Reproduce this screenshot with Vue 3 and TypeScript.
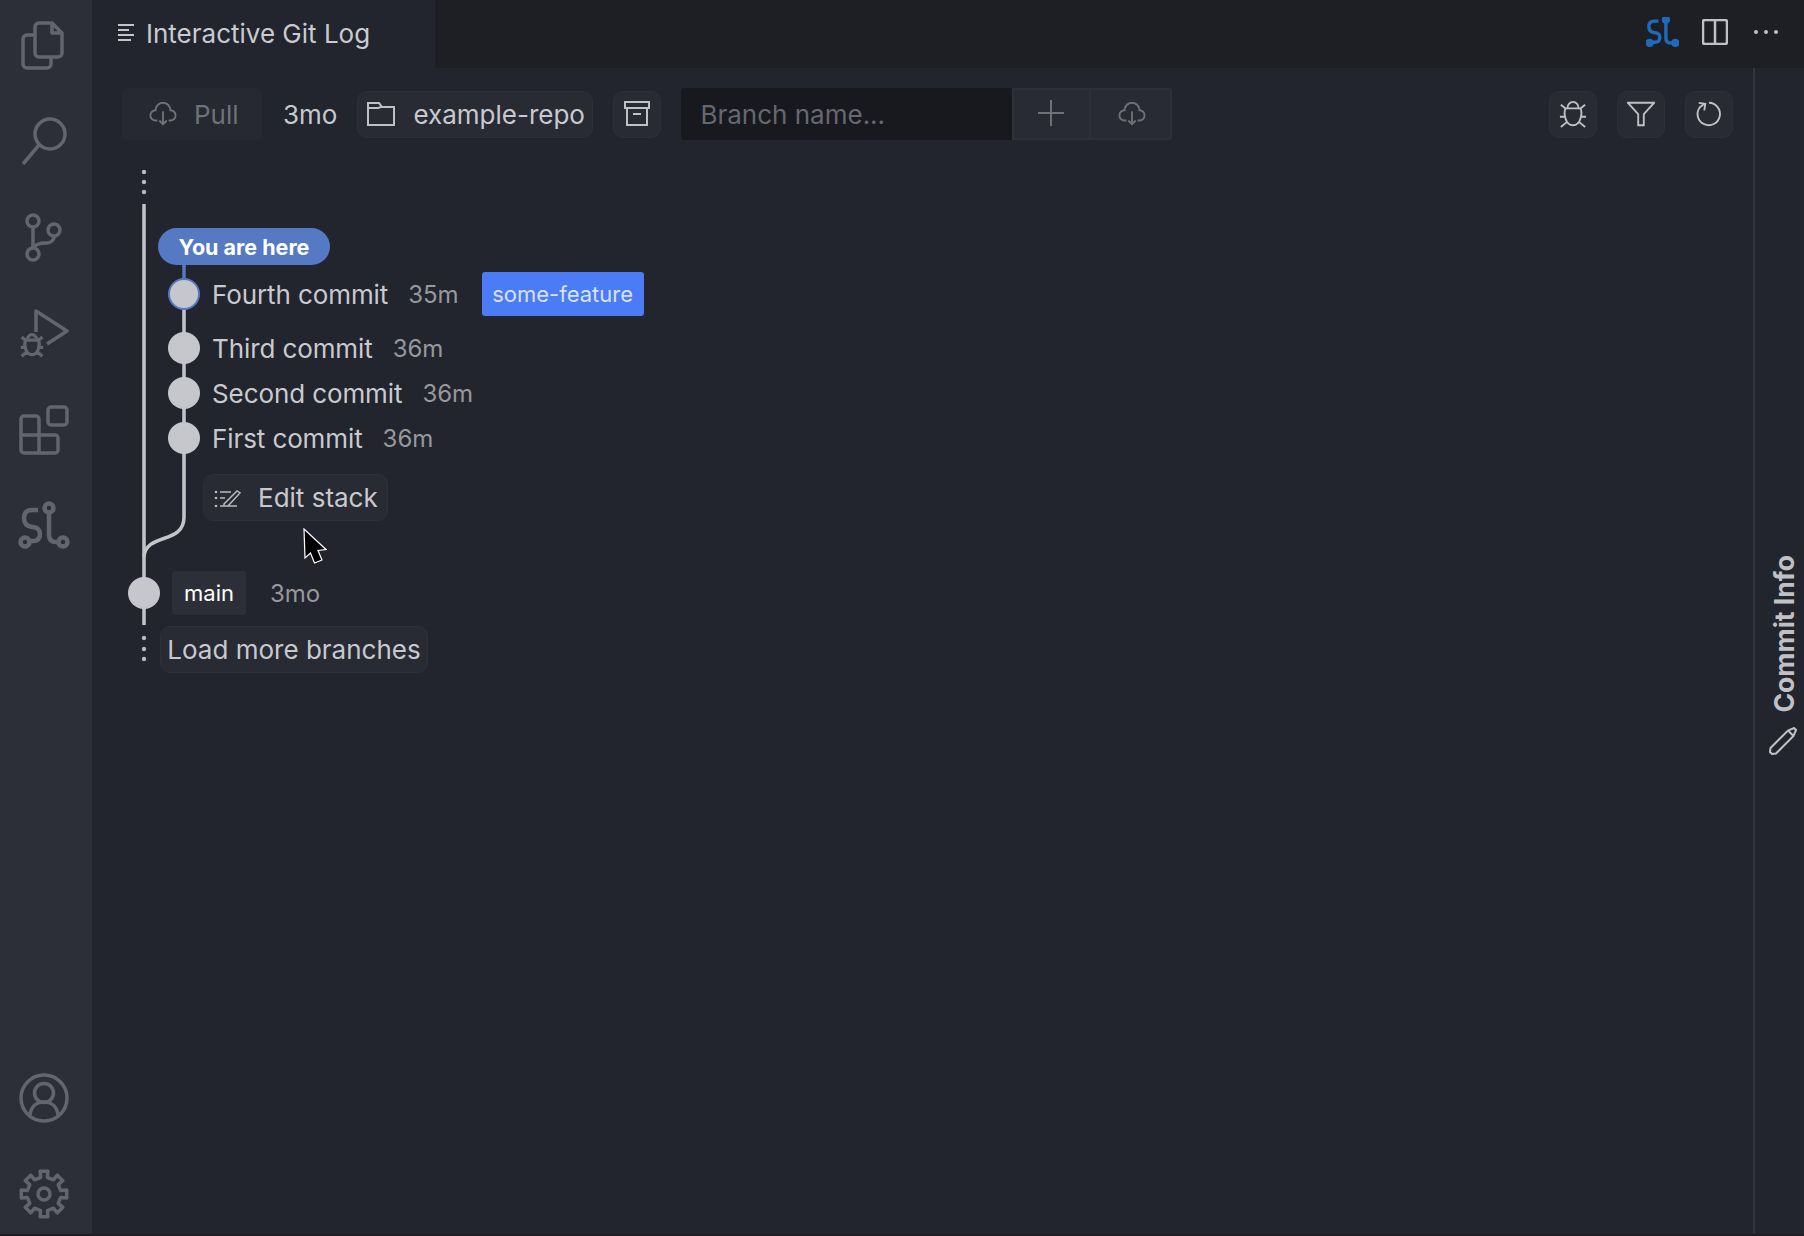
<script setup lang="ts">
interface Commit { title: string; age: string; tag?: string; head?: boolean; gapClass: string }

const commits: Commit[] = [
  { title: 'Fourth commit', age: '35m', tag: 'some-feature', head: true, gapClass: 'gap-a' },
  { title: 'Third commit', age: '36m', gapClass: 'gap-b' },
  { title: 'Second commit', age: '36m', gapClass: 'gap-c' },
  { title: 'First commit', age: '36m', gapClass: 'gap-c' },
]

function gearPoints(cx: number, cy: number): string {
  const teeth = 8
  const outer = 23
  const inner = 17
  const pts: string[] = []
  for (let i = 0; i < teeth; i++) {
    const a = (i / teeth) * Math.PI * 2 - Math.PI / 2
    const list: [number, number][] = [
      [inner, a - 0.2],
      [outer, a - 0.17],
      [outer, a + 0.17],
      [inner, a + 0.2],
    ]
    for (const [r, t] of list) {
      pts.push(`${(cx + r * Math.cos(t)).toFixed(1)},${(cy + r * Math.sin(t)).toFixed(1)}`)
    }
  }
  return pts.join(' ')
}
const gear = gearPoints(44, 48)
</script>

<template>
  <div class="app">
    <aside class="activity">
      <svg class="slot" viewBox="0 0 92 96">
        <path d="M35 35H27a4 4 0 0 0-4 4v25a4 4 0 0 0 4 4h20a4 4 0 0 0 4-4v-7" />
        <path d="M39 23h13l10 10v20a4 4 0 0 1-4 4H39a4 4 0 0 1-4-4V27a4 4 0 0 1 4-4zM52 23v10h10" />
      </svg>
      <svg class="slot" viewBox="0 96 92 96">
        <circle cx="50" cy="134" r="15" />
        <path d="M39 145 23 164" />
      </svg>
      <svg class="slot" viewBox="0 192 92 96">
        <circle cx="33" cy="221" r="6" />
        <circle cx="54" cy="230" r="6" />
        <circle cx="33" cy="254" r="6" />
        <path d="M33 227v21M54 236c0 5-4 7-8 7-6 0-11 2-13 5" />
      </svg>
      <svg class="slot" viewBox="0 288 92 96">
        <path d="M36 332v-21l31 20-20 13" />
        <g transform="translate(20 333) scale(.8)" class="mini">
          <path d="M7 9C5 13 6 27 15 27 24 27 25 13 23 9ZM9 9C9 5 12 2 15 2 18 2 21 5 21 9M2 5l6 5M28 5l-6 5M1 18h5M24 18h5M2 29l6-5M28 29l-6-5" />
        </g>
      </svg>
      <svg class="slot" viewBox="0 384 92 96">
        <rect x="48" y="407" width="19" height="18" rx="3" />
        <path d="M21 419a3 3 0 0 1 3-3h12a3 3 0 0 1 3 3v16h16a3 3 0 0 1 3 3v12a3 3 0 0 1-3 3H24a3 3 0 0 1-3-3zM21 435h18v18" />
      </svg>
      <svg class="slot sl" viewBox="0 480 92 96">
        <path d="M38 510H32Q24 510 24 518 24 526 32 527H33Q40 528 40 534 40 541 33 541H25M49 511V535Q49 542 56 542H62" />
        <circle class="node" cx="49" cy="508" r="4.5" />
        <circle class="node" cx="25" cy="542" r="4.5" />
        <circle class="node" cx="63" cy="542" r="4.5" />
      </svg>
      <div class="spring"></div>
      <svg class="slot" viewBox="0 0 92 96">
        <circle cx="44" cy="48" r="23" />
        <circle cx="44" cy="43" r="9.5" />
        <path d="M30 65c1-8 6-13 14-13s13 5 14 13" />
      </svg>
      <svg class="slot last" viewBox="0 0 92 88">
        <polygon :points="gear" />
        <circle cx="44" cy="48" r="6" />
      </svg>
    </aside>

    <div class="main">
      <header class="tabs">
        <div class="tab">
          <svg class="tab-icon" viewBox="0 0 18 20">
            <path d="M1 2h16M1 7h11M1 12h16M1 17h13" />
          </svg>
          <span>Interactive Git Log</span>
        </div>
        <div class="tab-actions">
          <svg class="sl-blue" viewBox="20 504 48 44">
            <path d="M38 510H32Q24 510 24 518 24 526 32 527H33Q40 528 40 534 40 541 33 541H25M49 511V535Q49 542 56 542H62" />
            <circle cx="49" cy="508" r="3.500" />
            <circle cx="25" cy="542" r="3.500" />
            <circle cx="63" cy="542" r="3.500" />
          </svg>
          <svg class="split" viewBox="0 0 26 26">
            <rect x="1" y="1" width="24" height="24" rx="2" />
            <path d="M13 1v24" />
          </svg>
          <div class="more"><i></i><i></i><i></i></div>
        </div>
      </header>

      <div class="body">
        <div class="content">
          <div class="toolbar">
            <button class="btn pull">
              <svg class="ic" viewBox="0 0 30 24">
                <path d="M9 19H7A5.500 5.500 0 0 1 7 8 8 8 0 0 1 23 8 5.500 5.500 0 0 1 23 19H21M15 9V23M11 19l4 4 4-4" />
              </svg>
              <span>Pull</span>
            </button>
            <span class="age-top">3mo</span>
            <button class="btn repo">
              <svg class="ic folder" viewBox="0 0 28 24">
                <path d="M1 1h11l3 4h12v18H1zM1 6h10l3-1" />
              </svg>
              <span>example-repo</span>
            </button>
            <button class="btn square archive">
              <svg class="ic" viewBox="0 0 26 26">
                <path d="M1 1h24v6H1zM3 7v17h20V7M9 13h8" />
              </svg>
            </button>
            <div class="branch">
              <div class="branch-input">Branch name...</div>
              <button class="attach plus">
                <svg class="ic" viewBox="0 0 26 26"><path d="M13 0v26M0 13h26" /></svg>
              </button>
              <button class="attach fetch">
                <svg class="ic" viewBox="0 0 30 24">
                  <path d="M9 19H7A5.500 5.500 0 0 1 7 8 8 8 0 0 1 23 8 5.500 5.500 0 0 1 23 19H21M15 9V23M11 19l4 4 4-4" />
                </svg>
              </button>
            </div>
            <div class="tools">
              <button class="btn square">
                <svg class="ic bright" viewBox="0 0 30 30">
                  <path d="M7 9C5 13 6 27 15 27 24 27 25 13 23 9ZM9 9C9 5 12 2 15 2 18 2 21 5 21 9M2 5l6 5M28 5l-6 5M1 18h5M24 18h5M2 29l6-5M28 29l-6-5" />
                </svg>
              </button>
              <button class="btn square">
                <svg class="ic bright" viewBox="0 0 30 26">
                  <path d="M1 1h28L18 13v12h-6V13z" />
                </svg>
              </button>
              <button class="btn square">
                <svg class="ic bright" viewBox="0 0 28 30">
                  <path d="M14 3A12 12 0 1 1 4 8L9 4M3 3l7 1-1 7" />
                </svg>
              </button>
            </div>
          </div>

          <div class="graph">
            <svg class="lines" viewBox="92 140 500 560">
              <circle class="dot" cx="144" cy="172" r="2.200" />
              <circle class="dot" cx="144" cy="182" r="2.200" />
              <circle class="dot" cx="144" cy="192" r="2.200" />
              <path class="grey" d="M144 204V625" />
              <path class="grey" d="M184 294V517C184 545 146 532 144 557" />
              <path class="blue" d="M184 262V280" />
              <circle class="dot" cx="144" cy="638" r="2.200" />
              <circle class="dot" cx="144" cy="649" r="2.200" />
              <circle class="dot" cx="144" cy="659" r="2.200" />
            </svg>

            <div class="here">You are here</div>

            <div v-for="c in commits" :key="c.title" class="commit" :class="c.gapClass">
              <span class="bullet" :class="{ head: c.head }"></span>
              <span class="title">{{ c.title }}</span>
              <span class="age">{{ c.age }}</span>
              <span v-if="c.tag" class="tag">{{ c.tag }}</span>
            </div>

            <button class="btn edit">
              <svg class="edit-ic" viewBox="0 0 28 20">
                <circle class="edit-dot" cx="2" cy="4" r="1.300" />
                <circle class="edit-dot" cx="2" cy="10" r="1.300" />
                <circle class="edit-dot" cx="2" cy="18" r="1.300" />
                <path d="M6 4h11M6 10h5M6 18h17M10 16 23 3l3 2-12 13h-4z" />
              </svg>
              <span>Edit stack</span>
            </button>

            <div class="commit trunk">
              <span class="bullet"></span>
              <span class="tag-main">main</span>
              <span class="age">3mo</span>
            </div>

            <button class="btn load">Load more branches</button>

            <svg class="cursor" viewBox="0 0 24 36">
              <path d="M1 1 2 30 7.500 25 11.500 35 19 32 15 22.500 23 21.500z" />
            </svg>
          </div>
        </div>

        <aside class="side">
          <span class="side-label">Commit Info</span>
          <svg class="pencil" viewBox="0 0 28 28">
            <path d="M1.500 21 19 3.500 25 1l2 2-2.500 6L7 26.500 3 27 1 25zM19 3.500l5.500 5.500" />
          </svg>
        </aside>
      </div>
    </div>
  </div>
</template>

<style>
html, body { margin: 0; background: #1e1f25; }
</style>

<style scoped>
.app {
  display: flex;
  width: 1804px;
  height: 1234px;
  overflow: hidden;
  font-family: Inter, "Liberation Sans", sans-serif;
  color: #c8c9ce;
  background: #22252d;
}
.activity {
  flex: 0 0 92px;
  display: flex;
  flex-direction: column;
  background: #2c2f38;
}
.slot {
  flex: 0 0 96px;
  width: 92px;
  height: 96px;
  fill: none;
  stroke: #62656e;
  stroke-width: 3.500;
  stroke-linejoin: round;
}
.slot.last { flex-basis: 88px; height: 88px; }
.slot.sl { stroke-width: 4.500; }
.mini { stroke-width: 4; }
.node { fill: #2c2f38; }
.spring { flex: 1; }
.main {
  flex: 1;
  min-width: 0;
  display: flex;
  flex-direction: column;
}
.tabs {
  flex: 0 0 68px;
  display: flex;
  background: #1e1f25;
}
.tab {
  width: 343px;
  box-sizing: border-box;
  padding: 0 0 2px 25px;
  display: flex;
  align-items: center;
  gap: 11px;
  background: #22252d;
  font-size: 26px;
  color: #c9cbd0;
}
.tab-icon {
  width: 18px;
  height: 20px;
  fill: none;
  stroke: #c4c5ca;
  stroke-width: 2;
}
.tab-actions {
  margin-left: auto;
  padding: 0 26px 4px 0;
  display: flex;
  align-items: center;
  gap: 23px;
}
.sl-blue {
  width: 33px;
  height: 30px;
  fill: #1e6bbd;
  stroke: #1e6bbd;
  stroke-width: 5;
}
.sl-blue path { fill: none; }
.split {
  width: 26px;
  height: 26px;
  margin-right: 3px;
  fill: none;
  stroke: #c0c1c6;
  stroke-width: 2.500;
}
.more {
  display: flex;
  gap: 6px;
}
.more i {
  width: 4px;
  height: 4px;
  border-radius: 50%;
  background: #c0c1c6;
}
.body {
  flex: 1;
  min-height: 0;
  display: flex;
}
.content {
  flex: 1;
  min-width: 0;
  display: flex;
  flex-direction: column;
}
.toolbar {
  height: 52px;
  margin-top: 20px;
  padding: 0 20px 0 30px;
  display: flex;
  align-items: center;
}
.btn {
  height: 47px;
  box-sizing: border-box;
  display: flex;
  align-items: center;
  padding: 0;
  border: 1px solid #2d3039;
  border-radius: 10px;
  background: #282b33;
  color: #c8c9ce;
  font: inherit;
  font-size: 26px;
}
.btn.square {
  width: 48px;
  justify-content: center;
}
.ic {
  fill: none;
  stroke: #c0c1c6;
  stroke-width: 2;
  width: 28px;
  height: 24px;
}
.pull {
  width: 140px;
  height: 52px;
  padding-left: 27px;
  gap: 17px;
  border: none;
  border-radius: 6px;
  background: #262932;
  color: #6f7178;
}
.pull .ic, .attach .ic { stroke: #6f7178; }
.age-top {
  margin-left: 21px;
  font-size: 26px;
}
.repo {
  width: 236px;
  margin-left: 20px;
  padding-left: 9px;
  gap: 18px;
}
.folder { width: 28px; height: 24px; }
.archive { margin-left: 20px; }
.archive .ic { width: 26px; height: 26px; }
.branch {
  margin-left: 20px;
  display: flex;
  height: 52px;
}
.branch-input {
  width: 331px;
  box-sizing: border-box;
  padding-left: 19px;
  display: flex;
  align-items: center;
  background: #17191f;
  border-radius: 4px 0 0 4px;
  color: #66686f;
  font-size: 26px;
}
.attach {
  display: flex;
  align-items: center;
  justify-content: center;
  padding: 0;
  border: 2px solid #2d3039;
  background: #282b33;
}
.plus { width: 79px; }
.plus .ic { width: 26px; height: 26px; margin: -2px 2px 0 0; }
.fetch { width: 81px; padding-left: 2px; border-left: none; border-radius: 0 4px 4px 0; }
.tools {
  margin-left: auto;
  display: flex;
  gap: 20px;
}
.tools .ic { width: 28px; height: 28px; }
.bright { stroke: #c0c1c6; }
.graph {
  position: relative;
  flex: 1;
  padding-top: 88px;
  display: flex;
  flex-direction: column;
  align-items: flex-start;
}
.lines {
  position: absolute;
  left: 0;
  top: 0;
  width: 500px;
  height: 560px;
  pointer-events: none;
}
.dot { fill: #b9bac0; }
.grey {
  fill: none;
  stroke: #c4c5ca;
  stroke-width: 3.500;
}
.blue {
  fill: none;
  stroke: #5679c4;
  stroke-width: 3.500;
}
.here {
  position: relative;
  margin-left: 66px;
  width: 172px;
  height: 37px;
  display: flex;
  align-items: center;
  justify-content: center;
  border-radius: 19px;
  background: #5679c4;
  color: #fff;
  font-size: 21.500px;
  font-weight: 700;
}
.commit {
  position: relative;
  height: 36px;
  margin-left: 76px;
  display: flex;
  align-items: center;
  font-size: 26px;
  white-space: nowrap;
}
.gap-a { margin-top: 11px; }
.gap-b { margin-top: 18px; }
.gap-c { margin-top: 9px; }
.bullet {
  width: 32px;
  height: 32px;
  box-sizing: border-box;
  border-radius: 50%;
  background: #c6c7cc;
}
.bullet.head { border: 2.500px solid #5679c4; }
.title {
  margin-left: 12px;
  color: #c9cacf;
  letter-spacing: -0.1px;
}
.age {
  margin-left: 20px;
  font-size: 24px;
  color: #97989e;
}
.tag {
  margin-left: 23px;
  width: 162px;
  height: 44px;
  display: flex;
  align-items: center;
  justify-content: center;
  border-radius: 3px;
  background: #4b7bf5;
  color: #d8e2fb;
  font-size: 22px;
}
.edit {
  position: relative;
  width: 185px;
  margin-top: 18px;
  margin-left: 111px;
  padding-left: 10px;
  gap: 16px;
}
.edit-ic {
  width: 28px;
  height: 20px;
  fill: none;
  stroke: #b9bac0;
  stroke-width: 1.500;
}
.edit-dot { fill: #b9bac0; stroke: none; }
.trunk {
  height: 44px;
  margin-top: 50px;
  margin-left: 36px;
}
.tag-main {
  margin-left: 12px;
  width: 74px;
  height: 44px;
  display: flex;
  align-items: center;
  justify-content: center;
  border-radius: 3px;
  background: #2d2f38;
  color: #fff;
  font-size: 22px;
  font-weight: 400;
}
.trunk .age { margin-left: 24px; }
.load {
  position: relative;
  width: 268px;
  margin-top: 11px;
  margin-left: 68px;
  justify-content: center;
}
.cursor {
  position: absolute;
  left: 211px;
  top: 388px;
  width: 24px;
  height: 36px;
  fill: #000;
  stroke: #fff;
  stroke-width: 1.200;
}
.side {
  flex: 0 0 51px;
  box-sizing: border-box;
  border-left: 2px solid #33363f;
  padding: 487px 0 0 6px;
  display: flex;
  flex-direction: column;
  align-items: center;
  gap: 14px;
}
.side-label {
  writing-mode: vertical-rl;
  transform: rotate(180deg);
  margin-left: 2px;
  font-size: 26.500px;
  font-weight: 700;
  color: #c0c1c6;
  white-space: nowrap;
}
.pencil {
  width: 28px;
  height: 28px;
  fill: none;
  stroke: #c0c1c6;
  stroke-width: 2;
}
</style>
